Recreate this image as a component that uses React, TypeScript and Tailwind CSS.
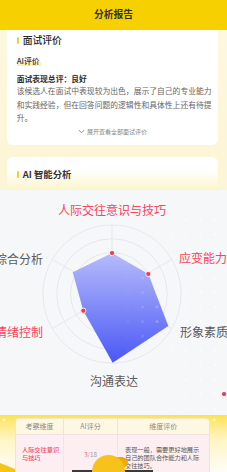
import React from "react";

const FONT = '"Noto Sans CJK SC", "Noto Sans", "Liberation Sans", sans-serif';

function Radar() {
  const cx = 112;
  const cy = 104;
  const R = 69;
  const rings = [13.8, 27.6, 41.4, 55.2, 69];
  const angles = [-90, -30, 30, 90, 150, 210];
  const pts: [number, number][] = [
    [112, 63],
    [148.3, 84],
    [168.3, 136],
    [112.7, 172.7],
    [83.3, 120.7],
    [72.7, 82.3],
  ];
  const dots: { x: number; y: number; o: number }[] = [];
  for (let x = 128; x <= 227; x += 14.5) {
    for (let y = 30; y <= 225; y += 14.5) {
      const o = Math.min(1, (x - 120) / 80);
      dots.push({ x, y, o });
    }
  }
  return (
    <svg width="227" height="225" viewBox="0 0 227 225" className="block">
      <defs>
        <linearGradient id="rg" x1="0" y1="63" x2="0" y2="173" gradientUnits="userSpaceOnUse">
          <stop offset="0" stopColor="#b6bcfb" />
          <stop offset="1" stopColor="#4a57f6" />
        </linearGradient>
      </defs>
      {rings.map((r) => (
        <circle key={r} cx={cx} cy={cy} r={r} fill="none" stroke="#e1e3ea" strokeWidth="0.8" />
      ))}
      {angles.map((a) => {
        const rad = (a * Math.PI) / 180;
        return (
          <line
            key={a}
            x1={cx}
            y1={cy}
            x2={cx + R * Math.cos(rad)}
            y2={cy + R * Math.sin(rad)}
            stroke="#e1e3ea"
            strokeWidth="0.8"
          />
        );
      })}
      <polygon points={pts.map((p) => p.join(",")).join(" ")} fill="url(#rg)" />
      {dots.map((d, i) => (
        <circle key={i} cx={d.x} cy={d.y} r="1.6" fill="#ffffff" opacity={0.45 * d.o} />
      ))}
      {[pts[0], pts[1], pts[4]].map((p, i) => (
        <circle key={i} cx={p[0]} cy={p[1]} r="2.6" fill="#f23a50" stroke="#ffffff" strokeWidth="0.9" />
      ))}
      <circle cx="224" cy="204" r="2.6" fill="#f23a50" stroke="#ffffff" strokeWidth="0.9" />
      <g fontFamily={FONT} fontSize="12" dominantBaseline="central">
        <text x="112" y="19" textAnchor="middle" fill="#f4465d">人际交往意识与技巧</text>
        <text x="43" y="68" textAnchor="end" fill="#5a5a5a">综合分析</text>
        <text x="179" y="67" textAnchor="start" fill="#f4465d">应变能力</text>
        <text x="43" y="141" textAnchor="end" fill="#f4465d">情绪控制</text>
        <text x="180" y="141" textAnchor="start" fill="#5a5a5a">形象素质</text>
        <text x="114" y="190" textAnchor="middle" fill="#5a5a5a">沟通表达</text>
      </g>
    </svg>
  );
}

function BottomDeco() {
  const d: number[] = [];
  for (let x = 4; x < 227; x += 14) d.push(x);
  return (
    <svg width="227" height="57" viewBox="0 0 227 57" className="absolute left-0 top-0">
      {d.map((x) => (
        <circle key={x} cx={x} cy="5" r="1.8" fill="#ffffff" opacity="0.55" />
      ))}
      <polygon points="0,48 15,54 15,57 0,57" fill="#f6c519" />
    </svg>
  );
}

function Mascot() {
  return (
    <svg
      width="227"
      height="32"
      viewBox="0 0 227 32"
      className="absolute left-0 top-[440px] z-20 pointer-events-none"
    >
      <rect x="72" y="30" width="81" height="2" fill="#3a3a3a" />
      <path d="M113 21 C117 16 124 16 127.5 20 C129 23 127 27 123 28 C119 29 115 27 113 25 Z" fill="#f1ab0a" />
      <circle cx="108.5" cy="31.5" r="16.5" fill="#f8c21c" />
      <path d="M116 18.5 C119 17 123 17.5 125.5 20" stroke="#e49a08" strokeWidth="0.8" fill="none" />
    </svg>
  );
}

export default function App() {
  return (
    <div
      className="relative w-[227px] h-[472px] overflow-hidden flex flex-col bg-gradient-to-b from-[#fdf8e2] to-[#fcefc4]"
      style={{ fontFamily: FONT }}
    >
      <div className="h-[30px] shrink-0 bg-[#f7d000] flex items-center justify-center">
        <span className="text-[9.8px] font-bold text-[#2f2f2f] leading-none">分析报告</span>
      </div>

      <div className="mx-[7px] w-[211px] h-[115px] shrink-0 bg-white rounded-b-[6px] pl-[9.7px] flex flex-col">
        <div className="pt-[4px] h-[16px] flex items-center gap-[3.3px]">
          <div className="w-[2.7px] h-[7px] rounded-full bg-[#f7cd2c]" />
          <span className="text-[9.8px] leading-[12px] text-[#262626] font-medium">面试评价</span>
        </div>
        <div className="mt-[10px] h-[10px] flex">
          <span className="text-[7.8px] leading-[10px] font-medium text-[#333] bg-gradient-to-b from-transparent from-[65%] to-[#fdefb8] to-[65%] pr-[1px]">
            AI评价
          </span>
        </div>
        <div className="mt-[8px] text-[7.8px] leading-[10px] font-bold text-[#2e2e2e]">面试表现总评：良好</div>
        <div className="text-[7.8px] leading-[13.6px] text-[#666] whitespace-nowrap">
          <div>该候选人在面试中表现较为出色，展示了自己的专业能力</div>
          <div>和实践经验，但在回答问题的逻辑性和具体性上还有待提</div>
          <div>升。</div>
        </div>
        <div className="mt-[3px] h-[8px] flex items-center justify-center gap-[2px] pr-[9.7px]">
          <svg width="7" height="5" viewBox="0 0 7 5">
            <path d="M0.8 1 L3.5 3.8 L6.2 1" stroke="#777" strokeWidth="0.8" fill="none" />
          </svg>
          <span className="text-[6px] leading-[8px] text-[#888]">展开查看全部面试评价</span>
        </div>
      </div>

      <div className="mt-[12px] mx-[7px] w-[211px] h-[33px] shrink-0 rounded-t-[6px] bg-gradient-to-b from-white from-[40%] to-[#fdf4cc] pl-[9.7px] pt-[12px]">
        <div className="h-[10px] flex items-center gap-[3.3px]">
          <div className="w-[2.7px] h-[7px] rounded-full bg-[#f7cd2c]" />
          <span className="text-[9.4px] leading-[10px] font-bold text-[#333]">AI 智能分析</span>
        </div>
      </div>

      <div className="h-[225px] w-[227px] shrink-0 bg-[#f6f7f9]">
        <Radar />
      </div>

      <div className="relative h-[57px] w-[227px] shrink-0 bg-gradient-to-b from-[#fde24d] via-[#fff5c6] via-[45%] to-[#fffdf7]">
        <BottomDeco />
        <div className="absolute left-[15px] top-[3px] w-[194.5px] rounded-t-[4px] border border-[#f1e6c6] overflow-hidden">
          <div className="h-[14.5px] flex bg-[#fdf8e3] text-[7px] text-[#8a8a8a]">
            <div className="w-[48px] flex items-center justify-center border-r border-[#f1e6c6]">考察维度</div>
            <div className="w-[54px] flex items-center justify-center border-r border-[#f1e6c6]">AI评分</div>
            <div className="flex-1 flex items-center justify-center">维度评价</div>
          </div>
          <div className="h-[50px] flex bg-[#fdeff1] border-t border-[#f3e3e0]">
            <div className="w-[48px] pl-[6px] pt-[11px] border-r border-[#f6e1e4] text-[6.2px] leading-[8.6px] font-medium text-[#f0475d]">
              <div>人际交往意识</div>
              <div>与技巧</div>
            </div>
            <div className="w-[54px] pt-[16px] border-r border-[#f6e1e4] text-[6.2px] leading-[8px] text-center">
              <span className="text-[#f26479]">3</span>
              <span className="text-[#9a9a9a]">/18</span>
            </div>
            <div className="flex-1 pl-[7px] pt-[11px] text-[6.2px] leading-[8px] text-[#555] whitespace-nowrap">
              <div>表现一般，需要更好地展示</div>
              <div>自己的团队合作能力和人际</div>
              <div>交往技巧。</div>
            </div>
          </div>
        </div>
      </div>

      <Mascot />
    </div>
  );
}
